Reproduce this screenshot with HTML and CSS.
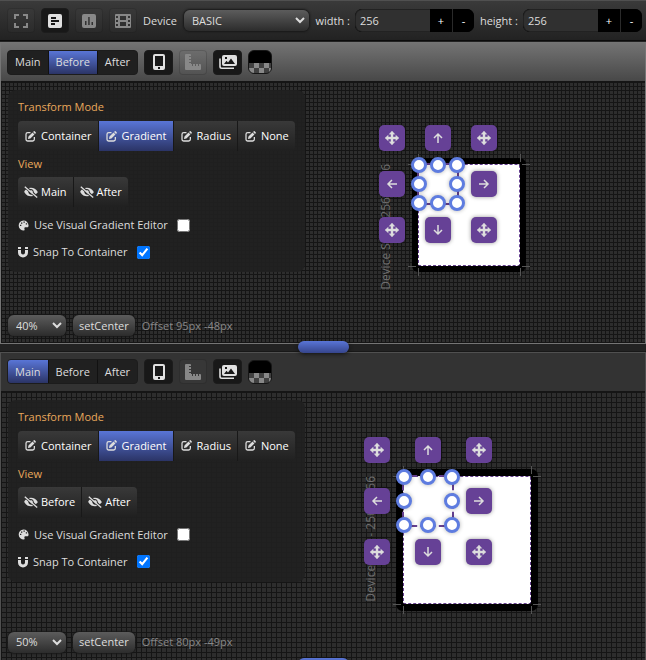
FILE: index.html
```html
<!DOCTYPE html>
<html lang="en">
<head>
<meta charset="utf-8">
<title>Gradient Editor</title>
<link rel="stylesheet" href="styles.css">
</head>
<body>
<svg class="sprite" aria-hidden="true">
  <symbol id="edit" viewBox="0 0 12 12"><path d="M6 1.700H3A1.900 1.900 0 0 0 1.100 3.600V9A1.900 1.900 0 0 0 3 10.900H8.300A1.900 1.900 0 0 0 10.200 9V6.600" fill="none" stroke="currentColor" stroke-width="1.400"/><path d="M3.800 6.100 8.200 1.700 10.300 3.800 5.900 8.200 3.200 8.800ZM8.800 1.100 9.600.300Q10.100-.1 10.600.400L11.600 1.400Q12.100 1.900 11.700 2.400L10.900 3.200Z" fill="currentColor"/></symbol>
  <symbol id="hide" viewBox="0 0 14 12"><path d="M2 3.400C0 5 .2 6 .2 6 2 9.300 4.400 10.300 7 10.300L9.300 10 7.800 8.700C5.600 9 4.300 7.800 4.200 5.600ZM4.800 2 6 3.100C8.300 2.600 9.900 4.200 9.800 6.200L11.900 8.200C13.400 7 13.800 6 13.800 6 12 2.900 9.800 1.700 7 1.700Z" fill="currentColor"/><path d="M5.500 5.400 8 7.800 9 6.200Q8.800 4.300 6.900 4Z" fill="currentColor"/><path d="M.8.800 13.200 11.400" stroke="currentColor" stroke-width="1.300"/></symbol>
  <symbol id="palette" viewBox="0 0 12 12"><path fill-rule="evenodd" d="M6 .5A5.500 5.500 0 1 0 6.500 11.500C7.600 11.300 7.200 10.200 7 9.600 6.700 8.600 7.300 8 8.200 8H10C11.100 8 11.600 7 11.500 6A5.500 5.500 0 0 0 6 .5ZM2.200 5.200H3.600V6.600H2.200ZM3.300 2.600H4.700V4H3.300ZM6 1.700H7.400V3.100H6ZM8.500 3.500H9.900V4.900H8.500Z" fill="currentColor"/></symbol>
  <symbol id="magnet" viewBox="0 0 10 12"><path d="M1.500 4V6.500A3.500 3.500 0 0 0 8.500 6.500V4" fill="none" stroke="currentColor" stroke-width="3"/><path d="M0 1H3V3H0ZM7 1H10V3H7Z" fill="currentColor"/></symbol>
  <symbol id="phone" viewBox="0 0 16 18"><path fill-rule="evenodd" d="M4 1H12Q14 1 14 3V15Q14 17 12 17H4Q2 17 2 15V3Q2 1 4 1ZM4 3V13H12V3ZM7 14V16H9V14Z" fill="currentColor"/></symbol>
  <symbol id="ruler" viewBox="0 0 16 16"><path d="M1 0H5Q6 0 6 1V2H4V3H6V5H4V6H6V8H4V9H6V10H7V12H8V10H10V12H11V10H13V12H14V10H15Q16 10 16 11V15Q16 16 15 16H1Q0 16 0 15V1Q0 0 1 0Z" fill="currentColor"/></symbol>
  <symbol id="images" viewBox="0 0 18 14"><path d="M1 3.500V11.500Q1 13.200 2.700 13.200H15" fill="none" stroke="currentColor" stroke-width="1.600"/><path fill-rule="evenodd" d="M5 0H16Q18 0 18 2V9Q18 11 16 11H5Q3 11 3 9V2Q3 0 5 0ZM5 9H16L12 3.500 9 7.500 7.500 5.800ZM6 2V4H8V2Z" fill="currentColor"/></symbol>
  <symbol id="move" viewBox="0 0 14 14"><path d="M7 0 9.800 3.200H8V6H10.800V4.200L14 7 10.800 9.800V8H8V10.800H9.800L7 14 4.200 10.800H6V8H3.200V9.800L0 7 3.200 4.200V6H6V3.200H4.200Z" fill="currentColor" stroke="currentColor" stroke-width=".4"/></symbol>
  <symbol id="up" viewBox="0 0 12 12"><path d="M6 11V2M2 6 6 2 10 6" fill="none" stroke="currentColor" stroke-width="1.500"/></symbol>
  <symbol id="down" viewBox="0 0 12 12"><path d="M6 1V10M2 6 6 10 10 6" fill="none" stroke="currentColor" stroke-width="1.500"/></symbol>
  <symbol id="left" viewBox="0 0 12 12"><path d="M11 6H2M6 2 2 6 6 10" fill="none" stroke="currentColor" stroke-width="1.500"/></symbol>
  <symbol id="right" viewBox="0 0 12 12"><path d="M1 6H10M6 2 10 6 6 10" fill="none" stroke="currentColor" stroke-width="1.500"/></symbol>
</svg>

<header class="topbar">
  <div class="modes">
    <button class="icon-btn ghost" aria-label="Fullscreen"><svg width="14" height="14" viewBox="0 0 14 14"><path d="M1 5V1H5M9 1H13V5M13 9V13H9M5 13H1V9" fill="none" stroke="currentColor" stroke-width="2"/></svg></button>
    <button class="icon-btn dark" aria-label="Editor"><svg width="14" height="14" viewBox="0 0 14 14"><path fill-rule="evenodd" d="M2 0H12Q14 0 14 2V12Q14 14 12 14H2Q0 14 0 12V2Q0 0 2 0ZM3 3V5H8V3ZM3 6V8H11V6ZM3 9V11H7V9Z" fill="currentColor"/></svg></button>
    <button class="icon-btn ghost" aria-label="Chart"><svg width="14" height="14" viewBox="0 0 14 14"><path fill-rule="evenodd" d="M2 0H12Q14 0 14 2V12Q14 14 12 14H2Q0 14 0 12V2Q0 0 2 0ZM3 7V11H4.500V7ZM6.200 3V11H7.700V3ZM9.500 8V11H11V8Z" fill="currentColor"/></svg></button>
    <button class="icon-btn ghost" aria-label="Film"><svg width="16" height="14" viewBox="0 0 16 14"><path fill-rule="evenodd" d="M1 0H15Q16 0 16 1V13Q16 14 15 14H1Q0 14 0 13V1Q0 0 1 0ZM5 2V6H11V2ZM5 8V12H11V8ZM1 2V4H3V2ZM1 6V8H3V6ZM1 10V12H3V10ZM13 2V4H15V2ZM13 6V8H15V6ZM13 10V12H15V10Z" fill="currentColor"/></svg></button>
  </div>
  <label class="field device">Device
    <span class="select"><select><option>BASIC</option></select><svg width="10" height="7" viewBox="0 0 10 7"><path d="M1 1 5 5 9 1" fill="none" stroke="currentColor" stroke-width="2"/></svg></span>
  </label>
  <div class="field"><label for="w">width :</label><span class="stepper"><input id="w" type="text" value="256"><button>+</button><button>-</button></span></div>
  <div class="field"><label for="h">height :</label><span class="stepper"><input id="h" type="text" value="256"><button>+</button><button>-</button></span></div>
</header>

<section class="panel focused">
  <div class="panel-bar">
    <div class="tabs"><button>Main</button><button class="on">Before</button><button>After</button></div>
    <button class="icon-btn wide dark" aria-label="Device frame"><svg width="16" height="18"><use href="#phone"/></svg></button>
    <button class="icon-btn ghost" aria-label="Ruler"><svg width="16" height="16"><use href="#ruler"/></svg></button>
    <button class="icon-btn wide dark" aria-label="Images"><svg width="18" height="14"><use href="#images"/></svg></button>
    <button class="swatch" aria-label="Background"></button>
  </div>
  <div class="canvas">
    <div class="stage small">
      <span class="size">Device Size - 256 x 256</span>
      <div class="screen"></div>
      <i class="guide h top"></i><i class="guide h bottom"></i><i class="guide v start"></i><i class="guide v end"></i>
      <div class="box"><i></i><i></i><i></i><i></i><i class="gap"></i><i></i><i></i><i></i><i></i></div>
      <div class="pad">
        <button aria-label="Top left"><svg width="14" height="14"><use href="#move"/></svg></button><button aria-label="Up"><svg width="12" height="12"><use href="#up"/></svg></button><button aria-label="Top right"><svg width="14" height="14"><use href="#move"/></svg></button>
        <button aria-label="Left"><svg width="12" height="12"><use href="#left"/></svg></button><span></span><button aria-label="Right"><svg width="12" height="12"><use href="#right"/></svg></button>
        <button aria-label="Bottom left"><svg width="14" height="14"><use href="#move"/></svg></button><button aria-label="Down"><svg width="12" height="12"><use href="#down"/></svg></button><button aria-label="Bottom right"><svg width="14" height="14"><use href="#move"/></svg></button>
      </div>
    </div>
    <div class="options">
      <h2>Transform Mode</h2>
      <div class="group">
        <button><svg width="11" height="11"><use href="#edit"/></svg>Container</button><button class="on"><svg width="11" height="11"><use href="#edit"/></svg>Gradient</button><button><svg width="11" height="11"><use href="#edit"/></svg>Radius</button><button><svg width="11" height="11"><use href="#edit"/></svg>None</button>
      </div>
      <h2>View</h2>
      <div class="group view">
        <button><svg width="14" height="12"><use href="#hide"/></svg>Main</button><button><svg width="14" height="12"><use href="#hide"/></svg>After</button>
      </div>
      <label class="check"><svg width="11" height="11"><use href="#palette"/></svg>Use Visual Gradient Editor<input type="checkbox"></label>
      <label class="check"><svg width="10" height="12"><use href="#magnet"/></svg>Snap To Container<input type="checkbox" checked></label>
    </div>
    <div class="status">
      <span class="select zoom"><select aria-label="Zoom"><option>40%</option></select><svg width="10" height="7" viewBox="0 0 10 7"><path d="M1 1 5 5 9 1" fill="none" stroke="currentColor" stroke-width="2"/></svg></span>
      <button class="center">setCenter</button>
      <span class="offset">Offset 95px -48px</span>
    </div>
  </div>
</section>

<div class="divider"><span class="grip"></span></div>

<section class="panel">
  <div class="panel-bar">
    <div class="tabs"><button class="on">Main</button><button>Before</button><button>After</button></div>
    <button class="icon-btn wide dark" aria-label="Device frame"><svg width="16" height="18"><use href="#phone"/></svg></button>
    <button class="icon-btn ghost" aria-label="Ruler"><svg width="16" height="16"><use href="#ruler"/></svg></button>
    <button class="icon-btn wide dark" aria-label="Images"><svg width="18" height="14"><use href="#images"/></svg></button>
    <button class="swatch" aria-label="Background"></button>
  </div>
  <div class="canvas">
    <div class="stage large">
      <span class="size">Device Size - 256 x 256</span>
      <div class="screen"></div>
      <i class="guide h top"></i><i class="guide h bottom"></i><i class="guide v start"></i><i class="guide v end"></i>
      <div class="box"><i></i><i></i><i></i><i></i><i class="gap"></i><i></i><i></i><i></i><i></i></div>
      <div class="pad">
        <button aria-label="Top left"><svg width="14" height="14"><use href="#move"/></svg></button><button aria-label="Up"><svg width="12" height="12"><use href="#up"/></svg></button><button aria-label="Top right"><svg width="14" height="14"><use href="#move"/></svg></button>
        <button aria-label="Left"><svg width="12" height="12"><use href="#left"/></svg></button><span></span><button aria-label="Right"><svg width="12" height="12"><use href="#right"/></svg></button>
        <button aria-label="Bottom left"><svg width="14" height="14"><use href="#move"/></svg></button><button aria-label="Down"><svg width="12" height="12"><use href="#down"/></svg></button><button aria-label="Bottom right"><svg width="14" height="14"><use href="#move"/></svg></button>
      </div>
    </div>
    <div class="options">
      <h2>Transform Mode</h2>
      <div class="group">
        <button><svg width="11" height="11"><use href="#edit"/></svg>Container</button><button class="on"><svg width="11" height="11"><use href="#edit"/></svg>Gradient</button><button><svg width="11" height="11"><use href="#edit"/></svg>Radius</button><button><svg width="11" height="11"><use href="#edit"/></svg>None</button>
      </div>
      <h2>View</h2>
      <div class="group view">
        <button><svg width="14" height="12"><use href="#hide"/></svg>Before</button><button><svg width="14" height="12"><use href="#hide"/></svg>After</button>
      </div>
      <label class="check"><svg width="11" height="11"><use href="#palette"/></svg>Use Visual Gradient Editor<input type="checkbox"></label>
      <label class="check"><svg width="10" height="12"><use href="#magnet"/></svg>Snap To Container<input type="checkbox" checked></label>
    </div>
    <div class="status">
      <span class="select zoom"><select aria-label="Zoom"><option>50%</option></select><svg width="10" height="7" viewBox="0 0 10 7"><path d="M1 1 5 5 9 1" fill="none" stroke="currentColor" stroke-width="2"/></svg></span>
      <button class="center">setCenter</button>
      <span class="offset">Offset 80px -49px</span>
    </div>
  </div>
</section>
<div class="divider last"><span class="grip"></span></div>
</body>
</html>
```
FILE: styles.css
```css
* { box-sizing: border-box; }
body {
  margin: 0;
  height: 100vh;
  overflow: hidden;
  display: flex;
  flex-direction: column;
  background: #222;
  color: #ddd;
  font: 11px/18px "Open Sans", "Noto Sans", sans-serif;
}
button, input, select { font: inherit; color: inherit; margin: 0; }
button { border: 0; padding: 0; background: none; white-space: nowrap; }
.sprite { position: absolute; width: 0; height: 0; }

.topbar {
  flex: none;
  height: 41px;
  display: flex;
  align-items: center;
  gap: 6px;
  padding: 0 4px 0 7px;
  background: linear-gradient(#3a3a3a, #222);
  border-top: 1px solid #505050;
  border-bottom: 1px solid #0c0c0c;
}
.modes { display: flex; gap: 6px; }
.icon-btn {
  flex: none;
  width: 28px;
  height: 25px;
  display: flex;
  align-items: center;
  justify-content: center;
  border-radius: 4px;
  border: 1px solid #1c1c1c;
}
.icon-btn.wide { width: 29px; }
.ghost { color: #888; border-color: rgba(0, 0, 0, .16); background: rgba(255, 255, 255, .02); }
.dark { color: #e0e0e0; background: #181818; }
.field { display: flex; align-items: center; gap: 5px; white-space: nowrap; }
.device { flex: 1; gap: 7px; }
.select {
  position: relative;
  display: flex;
  flex: 1;
  border-radius: 6px;
  background: linear-gradient(#5c5c5c, #2c2c2c);
  box-shadow: 0 0 2px 1px #181818;
}
.select select {
  appearance: none;
  width: 100%;
  height: 21px;
  padding: 0 22px 0 8px;
  border: 0;
  background: none;
  outline: 0;
}
.select svg { position: absolute; right: 4px; top: 7px; pointer-events: none; }
.stepper {
  display: flex;
  height: 23px;
  width: 119px;
  border-radius: 7px;
  overflow: hidden;
  background: #000;
}
.stepper input {
  flex: 1;
  min-width: 0;
  padding: 0 4px;
  border: 1px solid #222;
  border-right: 0;
  border-radius: 7px 0 0 7px;
  background: #303030;
  outline: 0;
}
.stepper button { width: 22px; color: #fff; background: #000; }
.stepper button + button { border-left: 1px solid #2a2a2a; }

.panel {
  flex: 309 1 0;
  min-height: 0;
  display: flex;
  flex-direction: column;
  border: 1px solid #505050;
  border-width: 1px 1px 0;
}
.focused { flex-grow: 301; margin-top: 1px; border-color: #757575; border-bottom-width: 1px; }
.panel-bar {
  flex: none;
  height: 39px;
  display: flex;
  align-items: center;
  gap: 6px;
  padding: 0 6px;
  background: #333;
  border-bottom: 1px solid #151515;
}
.focused .panel-bar { background: linear-gradient(#737373, #484848); }
.tabs { display: flex; height: 25px; border: 1px solid #1c1c1c; border-radius: 4px; overflow: hidden; background: #202020; }
.tabs button { padding: 0 7px; }
.tabs button + button { border-left: 1px solid #111; }
.tabs .on, .group .on { background: linear-gradient(#5975d6, #2b3466); }
.swatch {
  width: 24px;
  height: 24px;
  border: 1px solid #161616;
  border-radius: 6px;
  background:
    linear-gradient(#000 0 0) 0 0 / 100% 12px no-repeat,
    repeating-conic-gradient(#888 0 25%, #404040 0 50%) 0 2px / 10px 10px;
}
.canvas {
  --cell: 5px;
  position: relative;
  flex: 1;
  min-height: 0;
  display: flex;
  flex-direction: column;
  justify-content: space-between;
  align-items: flex-start;
  padding: 8px 7px;
  overflow: hidden;
  background:
    repeating-linear-gradient(90deg, #151515 0 1px, transparent 1px var(--cell)),
    repeating-linear-gradient(#151515 0 1px, #2d2d2d 1px var(--cell));
}
.focused .canvas { --cell: 4px; padding-bottom: 7px; }
.options {
  position: relative;
  width: 297px;
  height: 182px;
  padding: 8px 10px 0;
  border-radius: 8px;
  background: rgba(32, 32, 32, .93);
}
h2 { margin: 0; font-size: 11px; font-weight: 400; line-height: 18px; color: #e8a85c; }
.group { display: flex; width: max-content; height: 30px; margin: 5px 0 4px; border-radius: 4px; overflow: hidden; }
.group button {
  display: flex;
  align-items: center;
  gap: 5px;
  padding: 0 6px 0 7px;
  color: #fff;
  background: linear-gradient(#393939, #202020);
}
.group button + button { border-left: 1px solid #181818; }
.group svg { color: #ddd; }
.view { margin-top: 4px; }
.view button { padding: 0 6px; gap: 3px; }
.check { display: flex; align-items: center; gap: 5px; height: 18px; margin-top: 9px; }
.check input { width: 13px; height: 13px; margin-left: 4px; }
.status { position: relative; display: flex; align-items: center; gap: 7px; height: 20px; }
.zoom { width: 58px; flex: none; }
.center { height: 21px; padding: 0 6px; border-radius: 6px; background: linear-gradient(#5c5c5c, #2c2c2c); box-shadow: 0 0 2px 1px #181818; }
.offset { color: #888; }

/* Free canvas: device frame, gradient box and its handles */
.stage { position: absolute; --s: 102px; --b: 6px; --box: 38px; --gap: 20px; left: 417px; top: 82px; width: var(--s); height: var(--s); }
.large { --s: 128px; --b: 7px; --box: 48px; --gap: 25px; left: 402px; top: 84px; }
.screen {
  position: absolute;
  inset: 0;
  background: #fff;
  box-shadow: 0 0 0 var(--b) #000;
  border: 1px dashed #664190;
  border-radius: 2px;
}
.guide { position: absolute; }
.guide.h { left: -10px; right: -10px; height: 1px; background: linear-gradient(90deg, #555 8px, transparent 8px calc(100% - 8px), #555 0); }
.guide.v { top: -10px; bottom: -10px; width: 1px; background: linear-gradient(#555 8px, transparent 8px calc(100% - 8px), #555 0); }
.guide.top { top: 0; }
.guide.bottom { bottom: -1px; }
.guide.start { left: 0; }
.guide.end { right: -1px; }
.box {
  position: absolute;
  box-sizing: content-box;
  left: -1px;
  top: -1px;
  width: var(--box);
  height: var(--box);
  display: grid;
  grid-template-columns: repeat(3, 0);
  grid-template-rows: repeat(3, 0);
  justify-content: space-between;
  align-content: space-between;
  place-items: center;
  border: 2px dashed #664190;
}
.box i { width: 16px; height: 16px; margin: -8px; border: 3px solid #5e7ce0; border-radius: 50%; background: #fff; box-shadow: 0 0 4px rgba(0, 0, 0, .3); }
.box .gap { visibility: hidden; }
.pad { position: absolute; left: -39px; top: -39px; display: grid; grid-template-columns: repeat(3, 26px); grid-auto-rows: 26px; gap: var(--gap); }
.pad button { display: flex; align-items: center; justify-content: center; border-radius: 5px; color: #ddd; background: #664196; box-shadow: 0 0 4px rgba(0, 0, 0, .4); }
.size { position: absolute; left: -41px; bottom: -24px; font-size: 12px; writing-mode: vertical-rl; rotate: 180deg; color: #707070; white-space: nowrap; }
.large .size { bottom: 2px; }

.divider { position: relative; flex: none; height: 8px; display: flex; justify-content: center; background: #222; border-bottom: 1px solid #181818; }
.grip { position: absolute; top: -3px; width: 51px; height: 12px; border-radius: 6px; background: linear-gradient(#5975d6, #36458c); box-shadow: 0 1px 4px #111; }
.last { height: 0; border: 0; }
.last .grip { top: -2px; }
```
